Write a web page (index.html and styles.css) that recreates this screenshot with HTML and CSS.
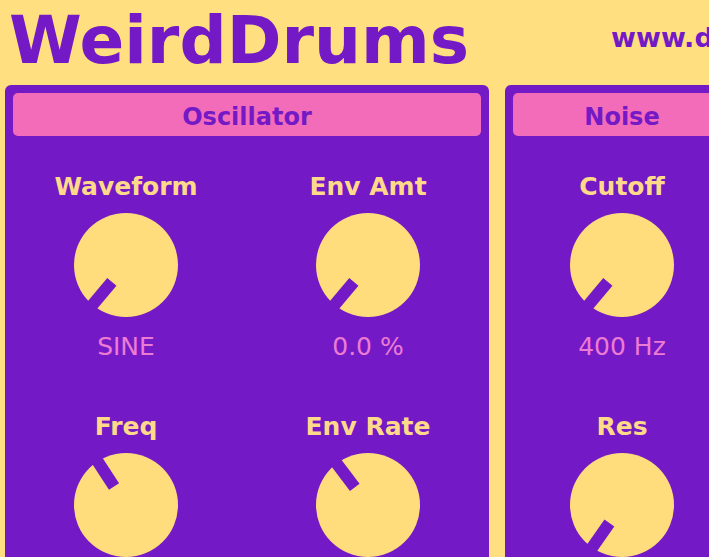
FILE: index.html
```html
<!DOCTYPE html>
<html>
<head>
<meta charset="utf-8">
<link rel="stylesheet" href="styles.css">
</head>
<body>
<div class="top">
  <h1 class="title">WeirdDrums</h1>
  <div class="url">www.dmetaldrums.com</div>
</div>
<div class="panels">
  <section class="panel osc">
    <div class="panel-head">Oscillator</div>
    <div class="grid">
      <div class="cell">
        <div class="label">Waveform</div>
        <svg class="knob" viewBox="-52 -52 104 104"><circle r="52" class="knob-body"/><rect x="-6" y="-54" width="12" height="32" class="knob-mark" transform="rotate(-140)"/></svg>
        <div class="value">SINE</div>
      </div>
      <div class="cell">
        <div class="label">Env Amt</div>
        <svg class="knob" viewBox="-52 -52 104 104"><circle r="52" class="knob-body"/><rect x="-6" y="-54" width="12" height="32" class="knob-mark" transform="rotate(-140)"/></svg>
        <div class="value">0.0 %</div>
      </div>
      <div class="cell">
        <div class="label">Freq</div>
        <svg class="knob" viewBox="-52 -52 104 104"><circle r="52" class="knob-body"/><rect x="-6" y="-54" width="12" height="32" class="knob-mark" transform="rotate(-33)"/></svg>
        <div class="value">200 Hz</div>
      </div>
      <div class="cell">
        <div class="label">Env Rate</div>
        <svg class="knob" viewBox="-52 -52 104 104"><circle r="52" class="knob-body"/><rect x="-6" y="-54" width="12" height="32" class="knob-mark" transform="rotate(-37)"/></svg>
        <div class="value">0.5</div>
      </div>
    </div>
  </section>
  <section class="panel noise">
    <div class="panel-head">Noise</div>
    <div class="grid">
      <div class="cell">
        <div class="label">Cutoff</div>
        <svg class="knob" viewBox="-52 -52 104 104"><circle r="52" class="knob-body"/><rect x="-6" y="-54" width="12" height="32" class="knob-mark" transform="rotate(-140)"/></svg>
        <div class="value">400 Hz</div>
      </div>
      <div class="cell">
        <div class="label">Res</div>
        <svg class="knob" viewBox="-52 -52 104 104"><circle r="52" class="knob-body"/><rect x="-6" y="-54" width="12" height="32" class="knob-mark" transform="rotate(-145)"/></svg>
        <div class="value">0.0</div>
      </div>
    </div>
  </section>
</div>
</body>
</html>
```
FILE: styles.css
```css
html, body {
  margin: 0;
  padding: 0;
}
body {
  background: #ffdf7f;
  font-family: "DejaVu Sans", Verdana, sans-serif;
  width: 709px;
  height: 557px;
  overflow: hidden;
  white-space: nowrap;
}
.top {
  display: flex;
  align-items: flex-start;
  height: 85px;
  box-sizing: border-box;
  padding-left: 9px;
}
.title {
  margin: 0;
  padding-top: 2px;
  font-size: 66px;
  font-weight: bold;
  line-height: normal;
  color: #7419c6;
  flex: none;
}
.url {
  margin-left: 142px;
  margin-top: 22px;
  font-size: 27px;
  font-weight: bold;
  color: #7419c6;
  flex: none;
}
.panels {
  display: flex;
  gap: 16px;
  padding-left: 5px;
}
.panel {
  flex: none;
  background: #7419c6;
  border-radius: 6px;
  padding: 8px;
  height: 600px;
}
.osc {
  width: 468px;
}
.noise {
  width: 218px;
}
.panel-head {
  background: #f36cb9;
  border-radius: 5px;
  height: 43px;
  box-sizing: border-box;
  padding-top: 5px;
  line-height: 38px;
  text-align: center;
  font-size: 24px;
  font-weight: bold;
  color: #7419c6;
}
.grid {
  display: grid;
  grid-template-columns: 226px 226px;
  column-gap: 16px;
  row-gap: 51px;
  padding-top: 37px;
}
.noise .grid {
  grid-template-columns: 218px;
}
.cell {
  display: flex;
  flex-direction: column;
  align-items: center;
}
.label {
  font-size: 25px;
  font-weight: bold;
  line-height: 28px;
  color: #ffd98a;
}
.knob {
  display: block;
  width: 104px;
  height: 104px;
  margin-top: 12px;
}
.knob-body {
  fill: #ffdc7c;
}
.knob-mark {
  fill: #7419c6;
}
.value {
  margin-top: 15px;
  font-size: 25px;
  line-height: 30px;
  color: #ec7bd3;
}
```
